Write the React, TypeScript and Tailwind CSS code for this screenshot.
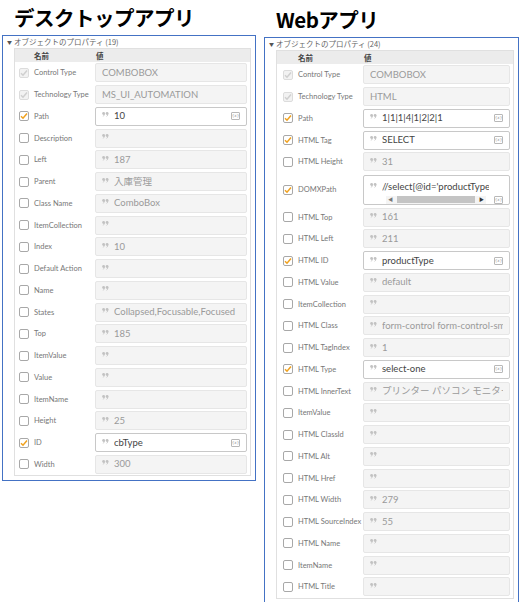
import React from "react";

type Prop = {
    label: string;
    value?: string;
    check: "locked" | "on" | "off";
    tall?: boolean;
};

const desktopProps: Prop[] = [
    { label: "Control Type", value: "COMBOBOX", check: "locked" },
    { label: "Technology Type", value: "MS_UI_AUTOMATION", check: "locked" },
    { label: "Path", value: "10", check: "on" },
    { label: "Description", check: "off" },
    { label: "Left", value: "187", check: "off" },
    { label: "Parent", value: "入庫管理", check: "off" },
    { label: "Class Name", value: "ComboBox", check: "off" },
    { label: "ItemCollection", check: "off" },
    { label: "Index", value: "10", check: "off" },
    { label: "Default Action", check: "off" },
    { label: "Name", check: "off" },
    { label: "States", value: "Collapsed,Focusable,Focused", check: "off" },
    { label: "Top", value: "185", check: "off" },
    { label: "ItemValue", check: "off" },
    { label: "Value", check: "off" },
    { label: "ItemName", check: "off" },
    { label: "Height", value: "25", check: "off" },
    { label: "ID", value: "cbType", check: "on" },
    { label: "Width", value: "300", check: "off" },
];

const webProps: Prop[] = [
    { label: "Control Type", value: "COMBOBOX", check: "locked" },
    { label: "Technology Type", value: "HTML", check: "locked" },
    { label: "Path", value: "1|1|1|4|1|2|2|1", check: "on" },
    { label: "HTML Tag", value: "SELECT", check: "on" },
    { label: "HTML Height", value: "31", check: "off" },
    { label: "DOMXPath", value: "//select[@id='productType']", check: "on", tall: true },
    { label: "HTML Top", value: "161", check: "off" },
    { label: "HTML Left", value: "211", check: "off" },
    { label: "HTML ID", value: "productType", check: "on" },
    { label: "HTML Value", value: "default", check: "off" },
    { label: "ItemCollection", check: "off" },
    { label: "HTML Class", value: "form-control form-control-sm", check: "off" },
    { label: "HTML TagIndex", value: "1", check: "off" },
    { label: "HTML Type", value: "select-one", check: "on" },
    { label: "HTML InnerText", value: "プリンター パソコン モニター", check: "off" },
    { label: "ItemValue", check: "off" },
    { label: "HTML ClassId", check: "off" },
    { label: "HTML Alt", check: "off" },
    { label: "HTML Href", check: "off" },
    { label: "HTML Width", value: "279", check: "off" },
    { label: "HTML SourceIndex", value: "55", check: "off" },
    { label: "HTML Name", check: "off" },
    { label: "ItemName", check: "off" },
    { label: "HTML Title", check: "off" },
];

const CheckBox = ({ state }: { state: Prop["check"] }) => {
    if (state === "off") {
        return <span className="block w-[10px] h-[10px] rounded-[2px] border border-[#a8a8a8] bg-white shrink-0" />;
    }
    const locked = state === "locked";
    return (
        <span className={locked
            ? "flex items-center justify-center w-[10px] h-[10px] rounded-[2px] border border-[#dcdcdc] bg-[#f2f2f2] shrink-0"
            : "flex items-center justify-center w-[10px] h-[10px] rounded-[2px] border border-[#a8a8a8] bg-white shrink-0"}>
            <svg width="8" height="8" viewBox="0 0 8 8">
                <polyline points="1,4.2 3,6.2 7,1.5" fill="none" stroke={locked ? "#cfcfcf" : "#f0a11e"} strokeWidth="1.5" />
            </svg>
        </span>
    );
};

// the little "99" quote mark in front of each value
const Quote = () => (
    <svg width="7" height="5" viewBox="0 0 7 5" className="mr-[5px] -mt-[3px] shrink-0">
        <circle cx="1.6" cy="1.5" r="1.4" fill="#c2c2c2" />
        <path d="M2.9 1.6 Q2.9 3.8 0.9 4.8 L0.7 4.4 Q1.8 3.6 1.8 2.6 Z" fill="#c2c2c2" />
        <circle cx="5.1" cy="1.5" r="1.4" fill="#c2c2c2" />
        <path d="M6.4 1.6 Q6.4 3.8 4.4 4.8 L4.2 4.4 Q5.3 3.6 5.3 2.6 Z" fill="#c2c2c2" />
    </svg>
);

const VarIcon = () => (
    <span className="flex items-center justify-center w-[9px] h-[8px] border border-[#b8b8b8] rounded-[1px] text-[4px] leading-none text-[#999] font-['DejaVu_Sans',sans-serif] shrink-0">{"{x}"}</span>
);

const ValueBox = ({ p }: { p: Prop }) => {
    const editable = p.check === "on";
    const locked = p.check === "locked";

    if (p.tall) {
        return (
            <div className="flex-1 min-w-0 h-[30px] mr-[3px] border border-[#c8c8c8] bg-white rounded-[2px] flex flex-col pl-[6px] pr-[6px] pt-[4px]">
                <div className="flex items-center min-w-0 pr-[14px]">
                    <Quote />
                    <span className="text-[9.5px] text-[#444] whitespace-nowrap overflow-hidden">{p.value}</span>
                </div>
                <div className="flex items-center mt-[2px]">
                    <div className="flex items-center h-[8px] w-[100px] ml-[16px] bg-[#f4f4f4]">
                        <span className="text-[5px] leading-none text-[#777] px-[2px]">◀</span>
                        <span className="block h-[7px] flex-1 bg-[#c4c4c4] mx-[2px]" />
                        <span className="text-[5px] leading-none text-[#333] px-[2px]">▶</span>
                    </div>
                    <span className="ml-auto"><VarIcon /></span>
                </div>
            </div>
        );
    }

    return (
        <div className={editable
            ? "flex-1 min-w-0 h-[19px] mr-[3px] flex items-center border border-[#c8c8c8] bg-white rounded-[2px] pl-[6px] pr-[6px]"
            : "flex-1 min-w-0 h-[19px] mr-[3px] flex items-center border border-[#e6e6e6] bg-[#f4f4f4] rounded-[2px] pl-[6px] pr-[6px]"}>
            {!locked && <Quote />}
            <span className={editable
                ? "text-[9.5px] text-[#444] whitespace-nowrap overflow-hidden flex-1"
                : "text-[9.5px] text-[#9a9a9a] whitespace-nowrap overflow-hidden flex-1"}>{p.value}</span>
            {editable && <VarIcon />}
        </div>
    );
};

const Panel = ({ title, count, props, labelW, checkPad }: { title: string, count: number, props: Prop[], labelW: string, checkPad: string }) => {
    return (
        <div className="flex flex-col">
            <h1 className="h-[35px] pl-[12px] pt-[2px] text-[20.5px] leading-[30px] font-bold text-black tracking-tight font-['Noto_Sans_CJK_JP',sans-serif]">{title}</h1>
            <div className="border border-[#4472c4] pl-[11px] pr-[4px] pb-[4px]">
                <div className="flex items-center h-[12px] -ml-[7px] text-[7.5px] text-[#666] font-['Noto_Sans_CJK_JP',sans-serif]">
                    <span className="text-[5px] mr-[2px] text-[#555]">▼</span>
                    オブジェクトのプロパティ ({count})
                </div>
                <div className="border border-[#e0e0e0] bg-white">
                    <div className="flex items-center h-[13px] bg-[#ececec] text-[7.5px] font-bold text-[#444] font-['Noto_Sans_CJK_JP',sans-serif]">
                        <span className={`${checkPad} invisible`}><span className="block w-[10px]" /></span>
                        <span className={`${labelW} pl-[5px]`}>名前</span>
                        <span className="pl-[1px]">値</span>
                    </div>
                    {props.map((p) => (
                        <div key={p.label} className={p.tall ? "flex items-center h-[33.5px]" : "flex items-center h-[21.75px]"}>
                            <span className={checkPad}><CheckBox state={p.check} /></span>
                            <span className={`${labelW} pl-[5px] text-[7.5px] text-[#777] whitespace-nowrap font-['Lato','Noto_Sans_CJK_JP',sans-serif]`}>{p.label}</span>
                            <div className="flex-1 min-w-0 flex font-['Lato','Noto_Sans_CJK_JP',sans-serif]">
                                <ValueBox p={p} />
                            </div>
                        </div>
                    ))}
                </div>
            </div>
        </div>
    );
};

const App = () => {
    return (
        <div className="w-[519px] h-[602px] bg-white flex items-start pl-[2px] gap-[8px]">
            <div className="w-[254px]">
                <Panel title="デスクトップアプリ" count={19} props={desktopProps} labelW="w-[66px]" checkPad="pl-[4px]" />
            </div>
            <div className="w-[255px] mt-[2px]">
                <Panel title="Webアプリ" count={24} props={webProps} labelW="w-[70px]" checkPad="pl-[6px]" />
            </div>
        </div>
    );
};

export default App;
